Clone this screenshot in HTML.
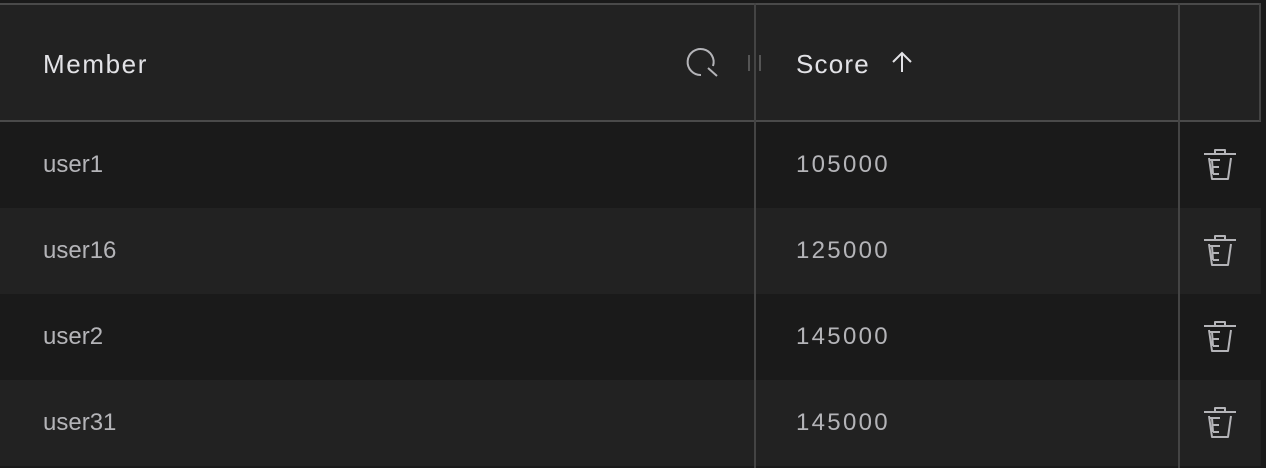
<!DOCTYPE html>
<html><head><style>
html,body{margin:0;padding:0;background:#1a1a1a;width:1266px;height:468px;overflow:hidden;font-family:"Liberation Sans",sans-serif}
.t{position:absolute;left:0;top:0;width:1266px;height:468px}
.hdr{position:absolute;left:0;top:3px;width:1261px;height:118px;background:#222;border-top:2px solid #4a4a4a;box-sizing:border-box}
.row{position:absolute;left:0;width:1261px;height:86px}
.a{background:#1a1a1a}.b{background:#222}
.txt{position:absolute;font-size:24px;color:#b4b4b8;line-height:24px}
.n{letter-spacing:2.3px}
.h{position:absolute;font-size:26px;color:#e2e2e6;line-height:26px;letter-spacing:1.6px}
.vl{position:absolute;width:2px;background:#444;top:3px;height:465px}
</style></head><body><div class="t">
<div class="hdr"></div>
<div style="position:absolute;left:0;top:120px;width:1261px;height:2px;background:#4a4a4a"></div>
<div class="row a" style="top:122px"></div>
<div class="row b" style="top:208px"></div>
<div class="row a" style="top:294px"></div>
<div class="row b" style="top:380px"></div>
<div class="vl" style="left:754px"></div>
<div class="vl" style="left:1178px"></div>
<div class="vl" style="left:1259px;height:118px"></div>
<div class="h" style="left:43px;top:51px">Member</div>
<div class="h" style="left:796px;top:51px;letter-spacing:1.2px">Score</div>
<svg style="position:absolute;left:888px;top:50px" width="28" height="26" viewBox="0 0 28 26"><path d="M14 22V3M5 12l9-9 9 9" fill="none" stroke="#e2e2e6" stroke-width="2"/></svg>
<svg style="position:absolute;left:684px;top:44px" width="36" height="36" viewBox="0 0 36 36"><path d="M17 31A13 13 0 1 1 29 22" fill="none" stroke="#b4b4b8" stroke-width="2"/><path d="M24 24l9 8" stroke="#b4b4b8" stroke-width="2"/></svg>
<div style="position:absolute;left:748px;top:55px;width:2px;height:16px;background:#555"></div>
<div style="position:absolute;left:759px;top:55px;width:2px;height:16px;background:#555"></div>
<div class="txt" style="left:43px;top:153px">user1</div>
<div class="txt n" style="left:796px;top:153px">105000</div>
<div class="txt" style="left:43px;top:239px">user16</div>
<div class="txt n" style="left:796px;top:239px">125000</div>
<div class="txt" style="left:43px;top:325px">user2</div>
<div class="txt n" style="left:796px;top:325px">145000</div>
<div class="txt" style="left:43px;top:411px">user31</div>
<div class="txt n" style="left:796px;top:411px">145000</div>
<svg width="0" height="0" style="position:absolute"><defs><g id="tr"><path d="M0 6H32M11 6V2H21V6M5 10L8 31H24L27 10M6 12H16M8 12L9 26M9 19H15M9 26H15" fill="none" stroke="#b4b4b8" stroke-width="2" stroke-linejoin="round"/></g></defs></svg>
<svg style="position:absolute;left:1204px;top:148px" width="32" height="34"><use href="#tr"/></svg>
<svg style="position:absolute;left:1204px;top:234px" width="32" height="34"><use href="#tr"/></svg>
<svg style="position:absolute;left:1204px;top:320px" width="32" height="34"><use href="#tr"/></svg>
<svg style="position:absolute;left:1204px;top:406px" width="32" height="34"><use href="#tr"/></svg>
</div></body></html>
